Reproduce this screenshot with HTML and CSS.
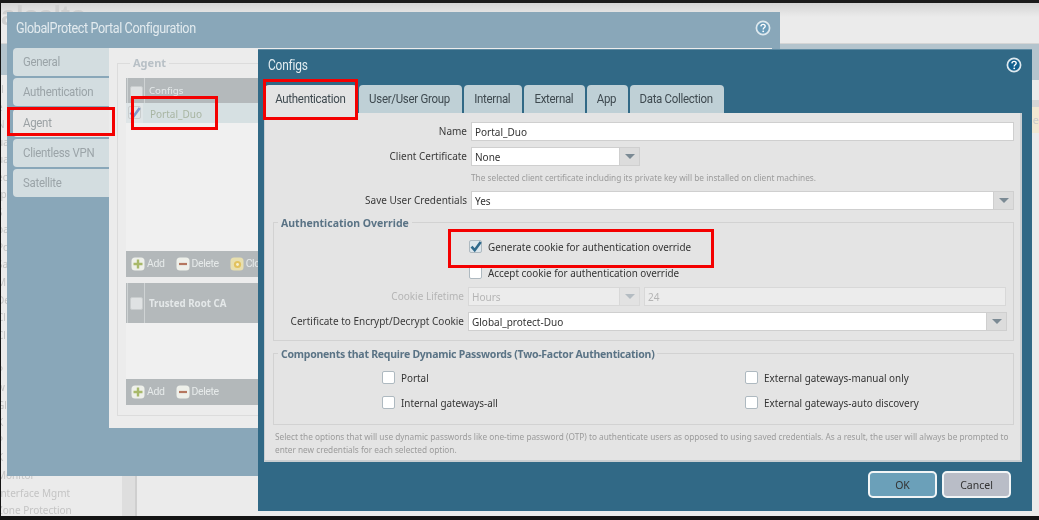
FILE: index.html
```html
<!DOCTYPE html>
<html lang="en">
<head>
<meta charset="utf-8">
<title>GlobalProtect Portal Configuration</title>
<link rel="stylesheet" href="styles.css">
</head>
<body>
<svg class="defs" width="0" height="0" aria-hidden="true">
  <symbol id="help" viewBox="0 0 16 16"><circle cx="8" cy="8" r="6.6" fill="currentColor" stroke="#dfe9ee" stroke-width="1.7"/><path d="M5.9 6.4c.1-1.3 1-2 2.2-2s2.1.7 2.1 1.8c0 1.6-2 1.6-2 3.2" fill="none" stroke="#fff" stroke-width="1.4"/><circle cx="8.2" cy="11.3" r=".9" fill="#fff"/></symbol>
  <symbol id="plus" viewBox="0 0 14 14"><rect x=".5" y=".5" width="13" height="13" rx="3.5" fill="#eef0ea"/><path d="M7 2.5v9M2.5 7h9" stroke="#a8b96a" stroke-width="2.4"/></symbol>
  <symbol id="minus" viewBox="0 0 14 14"><rect x=".5" y=".5" width="13" height="13" rx="3.5" fill="#eef0ea"/><path d="M3 7h8" stroke="#b5775f" stroke-width="2.2"/></symbol>
  <symbol id="clone" viewBox="0 0 14 14"><rect x=".5" y=".5" width="13" height="13" rx="3.5" fill="#e8dfae"/><circle cx="7.5" cy="7.5" r="3.6" fill="#e2c25e"/><circle cx="7.5" cy="7.5" r="1.4" fill="#f5efd0"/></symbol>
  <symbol id="tick" viewBox="0 0 14 14"><path d="M2.5 6.6l3.2 3.6 6-8.2" fill="none" stroke="currentColor" stroke-width="2.6"/></symbol>
</svg>

<main class="desktop">
  <div class="topbar"></div>
  <div class="page">
    <div class="page-head"><span class="logo">alsalto</span></div>
    <div class="page-band"></div>
    <div class="page-body">
      <ul class="nav">
        <li>rl</li><li>e</li><li>N</li><li>ua</li><li>ua</li><li>ec</li><li>tp</li><li>S</li><li>pa</li><li>Po</li>
        <li>Sa</li><li>M</li><li>De</li><li>Cl</li><li>Cl</li><li>&nbsp;</li><li>P</li><li>w</li><li>Gl</li><li>K</li><li>P</li><li>K</li>
        <li>Monitor</li><li>Interface Mgmt</li><li>Zone Protection</li>
      </ul>
      <div class="nav-scroll"></div>
      <div class="page-content">
        <div class="page-band-end"></div>
        <div class="page-row-head"></div>
        <div class="page-row">e</div>
      </div>
    </div>
  </div>
  <div class="bottombar"></div>

  <section class="window window-back">
    <header class="win-head">
      <h2 class="win-title">GlobalProtect Portal Configuration</h2>
      <svg class="help help-back"><use href="#help"/></svg>
    </header>
    <div class="back-main">
      <nav class="side-tabs">
        <a class="side-tab"><span>General</span></a>
        <a class="side-tab"><span>Authentication</span></a>
        <a class="side-tab side-tab-on"><span>Agent</span></a>
        <a class="side-tab"><span>Clientless VPN</span></a>
        <a class="side-tab"><span>Satellite</span></a>
      </nav>
      <div class="back-body">
        <fieldset class="agent-group">
          <legend>Agent</legend>
          <div class="mini-table mini-a">
            <div class="mini-head mini-head-a"><span class="mini-check"><i class="box box-dim"></i></span><span class="mini-name">Configs</span></div>
            <div class="mini-row"><span class="mini-check"><i class="box box-dim box-tick"><svg><use href="#tick"/></svg></i></span><span class="mini-cell">Portal_Duo</span></div>
            <div class="mini-fill"></div>
            <div class="mini-bar">
              <span class="tool"><svg><use href="#plus"/></svg>Add</span>
              <span class="tool"><svg><use href="#minus"/></svg>Delete</span>
              <span class="tool"><svg><use href="#clone"/></svg>Clone</span>
            </div>
          </div>
          <div class="mini-table mini-b">
            <div class="mini-head mini-head-b"><span class="mini-check"><i class="box box-dim"></i></span><span class="mini-name mini-bold">Trusted Root CA</span></div>
            <div class="mini-fill"></div>
            <div class="mini-bar">
              <span class="tool"><svg><use href="#plus"/></svg>Add</span>
              <span class="tool"><svg><use href="#minus"/></svg>Delete</span>
            </div>
          </div>
        </fieldset>
      </div>
    </div>
  </section>

  <section class="window window-front">
    <header class="front-head">
      <h2 class="front-title">Configs</h2>
      <svg class="help help-front"><use href="#help"/></svg>
    </header>
    <div class="tabs">
      <a class="tab tab-on tab-1"><span>Authentication</span></a>
      <a class="tab tab-2"><span>User/User Group</span></a>
      <a class="tab tab-3"><span>Internal</span></a>
      <a class="tab tab-4"><span>External</span></a>
      <a class="tab tab-5"><span>App</span></a>
      <a class="tab tab-6"><span>Data Collection</span></a>
    </div>
    <div class="panel">
      <div class="row">
        <label class="lbl">Name</label>
        <div class="field">Portal_Duo</div>
      </div>
      <div class="row row-gap">
        <label class="lbl">Client Certificate</label>
        <div class="select select-short"><div class="field">None</div><span class="arrow"></span></div>
      </div>
      <p class="hint hint-cert">The selected client certificate including its private key will be installed on client machines.</p>
      <div class="row">
        <label class="lbl">Save User Credentials</label>
        <div class="select"><div class="field">Yes</div><span class="arrow"></span></div>
      </div>

      <fieldset class="group group-override">
        <legend>Authentication Override</legend>
        <div class="check-row check-first"><i class="box box-on"><svg><use href="#tick"/></svg></i><span>Generate cookie for authentication override</span></div>
        <div class="check-row check-second"><i class="box"></i><span>Accept cookie for authentication override</span></div>
        <div class="row row-inner row-lifetime">
          <label class="lbl lbl-inner lbl-off">Cookie Lifetime</label>
          <div class="select select-off select-short-in"><div class="field">Hours</div><span class="arrow"></span></div>
          <div class="field field-off field-num">24</div>
        </div>
        <div class="row row-inner row-gap">
          <label class="lbl lbl-inner">Certificate to Encrypt/Decrypt Cookie</label>
          <div class="select select-cert"><div class="field">Global_protect-Duo</div><span class="arrow"></span></div>
        </div>
      </fieldset>

      <fieldset class="group group-components">
        <legend>Components that Require Dynamic Passwords (Two-Factor Authentication)</legend>
        <div class="comp-grid">
          <div class="comp"><i class="box"></i><span>Portal</span></div>
          <div class="comp"><i class="box"></i><span>External gateways-manual only</span></div>
          <div class="comp"><i class="box"></i><span>Internal gateways-all</span></div>
          <div class="comp"><i class="box"></i><span>External gateways-auto discovery</span></div>
        </div>
      </fieldset>

      <p class="hint hint-foot">Select the options that will use dynamic passwords like one-time password (OTP) to authenticate users as opposed to using saved credentials. As a result, the user will always be prompted to enter new credentials for each selected option.</p>
    </div>
    <footer class="actions">
      <button class="btn btn-ok">OK</button>
      <button class="btn btn-cancel">Cancel</button>
    </footer>
  </section>

  <div class="mark mark-agent"></div>
  <div class="mark mark-portal"></div>
  <div class="mark mark-tab"></div>
  <div class="mark mark-cookie"></div>
</main>
</body>
</html>
```

FILE: styles.css
```css
* { box-sizing: border-box; }
html, body { margin: 0; padding: 0; background: #141414; }
.defs { position: absolute; }
.desktop {
  position: relative;
  width: 1039px;
  height: 520px;
  overflow: hidden;
  display: flex;
  flex-direction: column;
  font-family: "Noto Sans", "DejaVu Sans", sans-serif;
  font-size: 10px;
  color: #333;
  filter: blur(.3px);
}
.topbar { height: 3px; background: #1a1a1a; flex: none; }
.bottombar { height: 4px; background: #141414; flex: none; }
.page { flex: 1; background: #ebebeb; display: flex; flex-direction: column; margin-left: 1px; min-height: 0; }
.page-head { height: 40px; flex: none; background: linear-gradient(#d4d4d4, #ebebeb 14px); overflow: hidden; }
.logo { display: block; font: bold 27px/24px "Liberation Sans", sans-serif; color: #cfcfcf; margin-top: 1px; }
.page-band { height: 32px; background: #b4c4cd; flex: none; border-top: 1px solid #d5d5d5; }
.page-body { flex: 1; display: flex; min-height: 0; overflow: hidden; }
.nav { list-style: none; margin: 6px 0 0 -4px; padding: 0; width: 125px; flex: none; color: #c4c4c4; font-size: 10px; line-height: 17.55px; white-space: nowrap; }
.nav-scroll { width: 15px; flex: none; background: #dedede; border-right: 2px solid #cfcfcf; }
.page-content { flex: 1; min-width: 0; }
.page-band-end { height: 5px; background: #b4c4cd; }
.page-row-head { height: 7px; margin-top: 20px; background: #d6d6d6; }
.page-row { height: 26px; background: #f1e8d2; color: #ccc; text-align: right; line-height: 26px; font-size: 11px; }

/* windows sit on a free desktop canvas */
.window { position: absolute; }
.window-back { left: 7px; top: 12px; width: 773px; height: 464px; background: #89a7b9; display: flex; flex-direction: column; }
.window-front { left: 258px; top: 49px; width: 774px; height: 462px; background: #316986; display: flex; flex-direction: column; padding: 0 10px 0 6px; border-top: 1px solid #5d8aa2; }

.win-head { height: 36px; flex: none; display: flex; align-items: center; justify-content: space-between; padding: 0 9px 5px 9px; }
.win-title { margin: 0; font: 400 14px/18px Roboto, sans-serif; letter-spacing: -.42px; color: #e3ebef; transform: scaleX(.9); transform-origin: left center; white-space: nowrap; }
.help { width: 16px; height: 16px; flex: none; }
.help-back { color: #6d9dba; }
.help-front { color: #13608f; }

.back-main { flex: 1; display: flex; min-height: 0; padding-left: 6px; height: 380px; }
.side-tabs { width: 96px; flex: none; display: flex; flex-direction: column; gap: 2.3px; }
.side-tab { height: 28px; background: #d3dde0; border-radius: 4px 0 0 4px; padding: 0 0 0 10px; font: 400 13px/28px Roboto, sans-serif; letter-spacing: -.32px; color: #9ba4a8; white-space: nowrap; }
.side-tab span { display: inline-block; transform: scaleX(.88); transform-origin: left center; }
.side-tab-on { background: #e8e8e8; color: #9ba1a4; }
.back-body { width: 663px; height: 380px; flex: none; background: #ececec; padding: 8px 0 0 8px; }
.agent-group { margin: 0; padding: 0 0 0 8px; height: 360px; border: 1px solid #dcdcdc; border-right: 0; min-width: 0; }
.agent-group legend { padding: 0 3px; margin-left: 4px; font: bold 11px/14px "Noto Sans", sans-serif; color: #b8c0c6; }
.mini-table { width: 680px; display: flex; flex-direction: column; background: #f0f0f0; }
.mini-a { height: 199px; margin-top: 8px; }
.mini-b { height: 122px; margin-top: 6px; }
.mini-head { display: flex; flex: none; background: #b4b9bb; }
.mini-head-a { height: 25px; }
.mini-head-b { height: 40px; }
.mini-check { width: 18px; flex: none; display: flex; justify-content: center; padding-top: 8px; margin-left: 1px; border-left: 1px solid #cfd3d4; border-right: 1px solid #cfd3d4; }
.mini-head-b .mini-check { padding-top: 14px; }
.mini-name { padding: 3px 0 0 4px; font-size: 9.7px; line-height: 20px; color: #e4e8e9; }
.mini-head-b .mini-name { padding-top: 11px; }
.mini-bold { font-weight: 700; }
.mini-row { height: 20px; flex: none; display: flex; background: #d6e0e2; }
.mini-row .mini-check { border: 0; padding-top: 3px; margin-left: 0; width: 17px; background: #dfe5e7; margin-right: 7px; }
.mini-cell { color: #a8b5a2; line-height: 22px; font-size: 10px; }
.mini-fill { flex: 1; }
.mini-bar { height: 26px; flex: none; background: #b3b8ba; display: flex; align-items: center; gap: 11px; padding-left: 5px; color: #e6eaea; font: 400 10.5px/14px Roboto, sans-serif; letter-spacing: -.4px; }
.tool { display: flex; align-items: center; gap: 2px; }
.tool svg { width: 14px; height: 14px; }

.front-head { height: 35px; flex: none; display: flex; align-items: center; justify-content: space-between; padding: 0 0 6px 4px; }
.front-title { margin: 0; font: 400 14px/18px Roboto, sans-serif; letter-spacing: -.2px; color: #e4eef2; transform: scaleX(.85); transform-origin: left center; }
.tabs { display: flex; gap: 2px; height: 28px; flex: none; padding-left: 1px; }
.tab { background: #bfd0d6; border-radius: 4px 4px 0 0; height: 28px; padding-right: 2px; text-align: center; font: 400 13.5px/27px Roboto, sans-serif; letter-spacing: -.35px; color: #3f4a50; white-space: nowrap; }
.tab span { display: inline-block; transform: scaleX(.85); }
.tab-on { background: #e4e4e4; }
.tab-1 { width: 92px; }
.tab-2 { width: 103px; }
.tab-3 { width: 58px; }
.tab-4 { width: 61px; }
.tab-5 { width: 41px; }
.tab-6 { width: 94px; }

.panel { height: 349px; flex: none; background: #e4e4e4; padding: 9px 6px 0 0; border: 1px solid #c9ced1; border-width: 0 2px 2px 1px; display: flex; flex-direction: column; }
.row { display: flex; gap: 4px; height: 19px; flex: none; }
.row-gap { margin-top: 6px; }
.lbl { width: 202px; flex: none; text-align: right; line-height: 19px; font-size: 10px; color: #3a3a3a; white-space: nowrap; }
.field { flex: 1; min-width: 0; height: 19px; background: #fff; border: 1px solid #cfcfcf; padding-left: 3px; line-height: 18px; font-size: 10px; color: #333; }
.select { flex: 1; display: flex; min-width: 0; }
.select-short { flex: none; width: 169px; }
.arrow { width: 20px; height: 19px; flex: none; background: #dcdcdc; border: 1px solid #cfcfcf; border-left: 0; display: flex; align-items: center; justify-content: center; }
.arrow::after { content: ""; border: 5px solid transparent; border-top: 5px solid #7b8a94; border-bottom: 0; }
.hint { margin: 0; color: #9b9b9b; font-size: 8.27px; line-height: 13px; }
.hint-cert { margin: 5px 0 0 206px; height: 20px; white-space: nowrap; }

.group { margin: 5px 0 0 8px; padding: 0; border: 1px solid #d2d2d2; flex: none; min-width: 0; }
.group legend { margin-left: 4px; padding: 1px 3px 0; font-weight: 700; font-size: 10.5px; line-height: 14px; color: #5a7385; white-space: nowrap; }
.group-override { height: 126px; }
.group-components { height: 79px; margin-top: 5px; }
.group-components legend { letter-spacing: -.25px; }
.box { width: 13px; height: 13px; flex: none; display: block; background: #fff; border: 1px solid #aeb9c0; border-radius: 2px; position: relative; }
.box svg { position: absolute; left: -1px; top: -1px; width: 14px; height: 14px; }
.box-on { background: #dce6ec; color: #2f6a8c; }
.box-dim { background: #dfe2e3; border-color: #c9cdce; }
.box-tick { background: #dfe5e7; color: #7f97c8; }
.check-row { display: flex; align-items: center; gap: 6px; margin-left: 195px; height: 14px; font-size: 9.9px; line-height: 16px; }
.check-row span { padding-top: 2px; }
.check-first { margin-top: 9px; }
.check-second { margin-top: 12px; }
.row-inner { gap: 4px; }
.row-lifetime { margin-top: 8px; }
.lbl-inner { width: 190px; }
.lbl-off { color: #b5b5b5; }
.select-off .field, .field-off { background: #ececec; color: #b5b5b5; border-color: #d8d8d8; }
.select-off .arrow { background: #e2e2e2; border-color: #d8d8d8; }
.select-off .arrow::after { border-top-color: #b4bcc2; }
.select-short-in { flex: none; width: 172px; }
.select-cert { flex: none; width: 539px; }
.field-num { flex: none; width: 362px; }
.comp-grid { display: grid; grid-template-columns: 363px 1fr; row-gap: 11px; padding: 9px 0 0 108px; }
.comp { display: flex; align-items: center; gap: 6px; height: 14px; font-size: 9.9px; line-height: 16px; }
.comp span { padding-top: 2px; }
.hint-foot { margin: 5px 0 0 10px; }

.actions { display: flex; justify-content: flex-end; gap: 5px; padding: 9px 11px 0 0; flex: 1; align-items: flex-start; }
.btn { width: 69px; height: 27px; border: 2px solid #f2f5f6; border-radius: 5px; font: 400 10.5px/20px "Noto Sans", sans-serif; color: #333; padding: 0; }
.btn-ok { background: #6ba0b9; }
.btn-cancel { background: #b9bdc7; }

/* annotations drawn over the screenshot */
.mark { position: absolute; border: 3px solid #f40000; }
.mark-agent { left: 7px; top: 107px; width: 108px; height: 29px; }
.mark-portal { left: 131px; top: 96px; width: 87px; height: 34px; }
.mark-tab { left: 263px; top: 79px; width: 95px; height: 41px; }
.mark-cookie { left: 448px; top: 229px; width: 266px; height: 39px; }
```
